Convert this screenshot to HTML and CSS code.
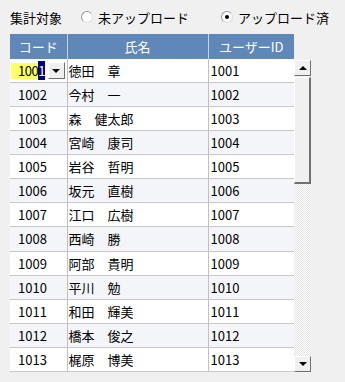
FILE: index.html
```html
<!DOCTYPE html>
<html lang="ja">
<head>
    <meta charset="UTF-8">
    <title>集計対象</title>
    <link rel="stylesheet" href="styles.css">
</head>
<body>
    <div class="filter">
        <span class="filter-label">集計対象</span>
        <label class="radio"><span class="radio-dot"></span>未アップロード</label>
        <label class="radio checked"><span class="radio-dot"></span>アップロード済</label>
    </div>

    <div class="grid-wrap">
        <table class="grid">
            <colgroup>
                <col class="col-code">
                <col class="col-name">
                <col class="col-id">
            </colgroup>
            <thead>
                <tr><th>コード</th><th>氏名</th><th>ユーザーID</th></tr>
            </thead>
            <tbody>
                <tr>
                    <td class="editing">
                        <div class="edit-cell">
                            <span class="edit-box">100<span class="sel">1</span></span>
                            <span class="combo-btn"><span class="tri-down"></span></span>
                        </div>
                    </td>
                    <td class="name">徳田　章</td><td class="uid">1001</td>
                </tr>
                <tr><td>1002</td><td class="name">今村　一</td><td class="uid">1002</td></tr>
                <tr><td>1003</td><td class="name">森　健太郎</td><td class="uid">1003</td></tr>
                <tr><td>1004</td><td class="name">宮崎　康司</td><td class="uid">1004</td></tr>
                <tr><td>1005</td><td class="name">岩谷　哲明</td><td class="uid">1005</td></tr>
                <tr><td>1006</td><td class="name">坂元　直樹</td><td class="uid">1006</td></tr>
                <tr><td>1007</td><td class="name">江口　広樹</td><td class="uid">1007</td></tr>
                <tr><td>1008</td><td class="name">西崎　勝</td><td class="uid">1008</td></tr>
                <tr><td>1009</td><td class="name">阿部　貴明</td><td class="uid">1009</td></tr>
                <tr><td>1010</td><td class="name">平川　勉</td><td class="uid">1010</td></tr>
                <tr><td>1011</td><td class="name">和田　輝美</td><td class="uid">1011</td></tr>
                <tr><td>1012</td><td class="name">橋本　俊之</td><td class="uid">1012</td></tr>
                <tr><td>1013</td><td class="name">梶原　博美</td><td class="uid">1013</td></tr>
            </tbody>
        </table>

        <div class="scrollbar">
            <div class="sb-btn"><span class="tri-up"></span></div>
            <div class="sb-thumb"></div>
            <div class="sb-track"></div>
            <div class="sb-btn"><span class="tri-down"></span></div>
        </div>
    </div>
</body>
</html>
```

FILE: styles.css
```css
body {
    margin: 0;
    background-color: #f0f0f0;
    font-family: "Noto Sans CJK JP", "DejaVu Sans", sans-serif;
    font-size: 13px;
    color: #000;
}

.filter {
    display: flex;
    align-items: center;
    height: 34px;
    padding-left: 10px;
    white-space: nowrap;
}

.filter-label {
    flex-shrink: 0;
    margin-right: 19px;
}

.radio {
    flex-shrink: 0;
    display: flex;
    align-items: center;
    gap: 5px;
    margin-right: 32px;
}

.radio:last-child {
    margin-right: 0;
}

.radio-dot {
    flex-shrink: 0;
    width: 10px;
    height: 10px;
    border-radius: 50%;
    background: #fff;
    border: 1px solid #9a9a9a;
    border-right-color: #dcdcdc;
    border-bottom-color: #dcdcdc;
    position: relative;
}

.radio.checked .radio-dot::after {
    content: "";
    position: absolute;
    left: 3px;
    top: 3px;
    width: 4px;
    height: 4px;
    border-radius: 50%;
    background: #000;
}

.grid-wrap {
    display: flex;
    margin-left: 10px;
}

.grid {
    width: 284px;
    table-layout: fixed;
    border-collapse: collapse;
    background: #fff;
}

.col-code { width: 57px; }
.col-name { width: 141px; }
.col-id { width: 86px; }

.grid th {
    height: 25px;
    padding: 0;
    background: #5f88b8;
    color: #fff;
    font-weight: normal;
    text-align: center;
    border-right: 1px solid #c6d3e4;
}

.grid th:last-child {
    border-right: none;
}

.grid td {
    height: 23px;
    padding: 0 0 0 8px;
    border-right: 1px solid #c0c0c0;
    border-bottom: 1px solid #c8c8c8;
    white-space: nowrap;
    overflow: hidden;
}

.grid td.name {
    padding-left: 1px;
}

.grid td.uid {
    padding-left: 2px;
    border-right: none;
}

.grid tbody tr:nth-child(even) td {
    background: #f3f5f9;
}

.grid td.editing {
    padding: 0 0 0 1px;
}

.edit-cell {
    display: flex;
    align-items: center;
    height: 23px;
}

.edit-box {
    flex-shrink: 0;
    height: 16px;
    line-height: 16px;
    padding-left: 7px;
    background: #ffff66;
    letter-spacing: -0.5px;
    white-space: nowrap;
}

.sel {
    background: #000080;
    color: #fff;
}

.combo-btn {
    flex-shrink: 0;
    width: 15px;
    height: 15px;
    margin-left: 3px;
    display: flex;
    align-items: center;
    justify-content: center;
    background: #f0f0f0;
    border: 1px solid #fff;
    border-right-color: #707070;
    border-bottom-color: #707070;
}

.tri-down {
    width: 0;
    height: 0;
    border-left: 4px solid transparent;
    border-right: 4px solid transparent;
    border-top: 4px solid #000;
}

.tri-up {
    width: 0;
    height: 0;
    border-left: 4px solid transparent;
    border-right: 4px solid transparent;
    border-bottom: 4px solid #000;
}

.scrollbar {
    width: 17px;
    margin-top: 26px;
    display: flex;
    flex-direction: column;
    height: 312px;
}

.sb-btn {
    height: 14px;
    display: flex;
    align-items: center;
    justify-content: center;
    background: #f0f0f0;
    border: 1px solid #fff;
    border-right-color: #707070;
    border-bottom-color: #707070;
}

.sb-thumb {
    height: 104px;
    margin-top: 1px;
    background: #f0f0f0;
    border: 1px solid #fff;
    border-right: 2px solid #707070;
    border-bottom: 2px solid #707070;
}

.sb-track {
    flex: 1;
    background: repeating-conic-gradient(#ffffff 0 25%, #e4e4e4 0 50%) 0 0 / 2px 2px;
}
```
